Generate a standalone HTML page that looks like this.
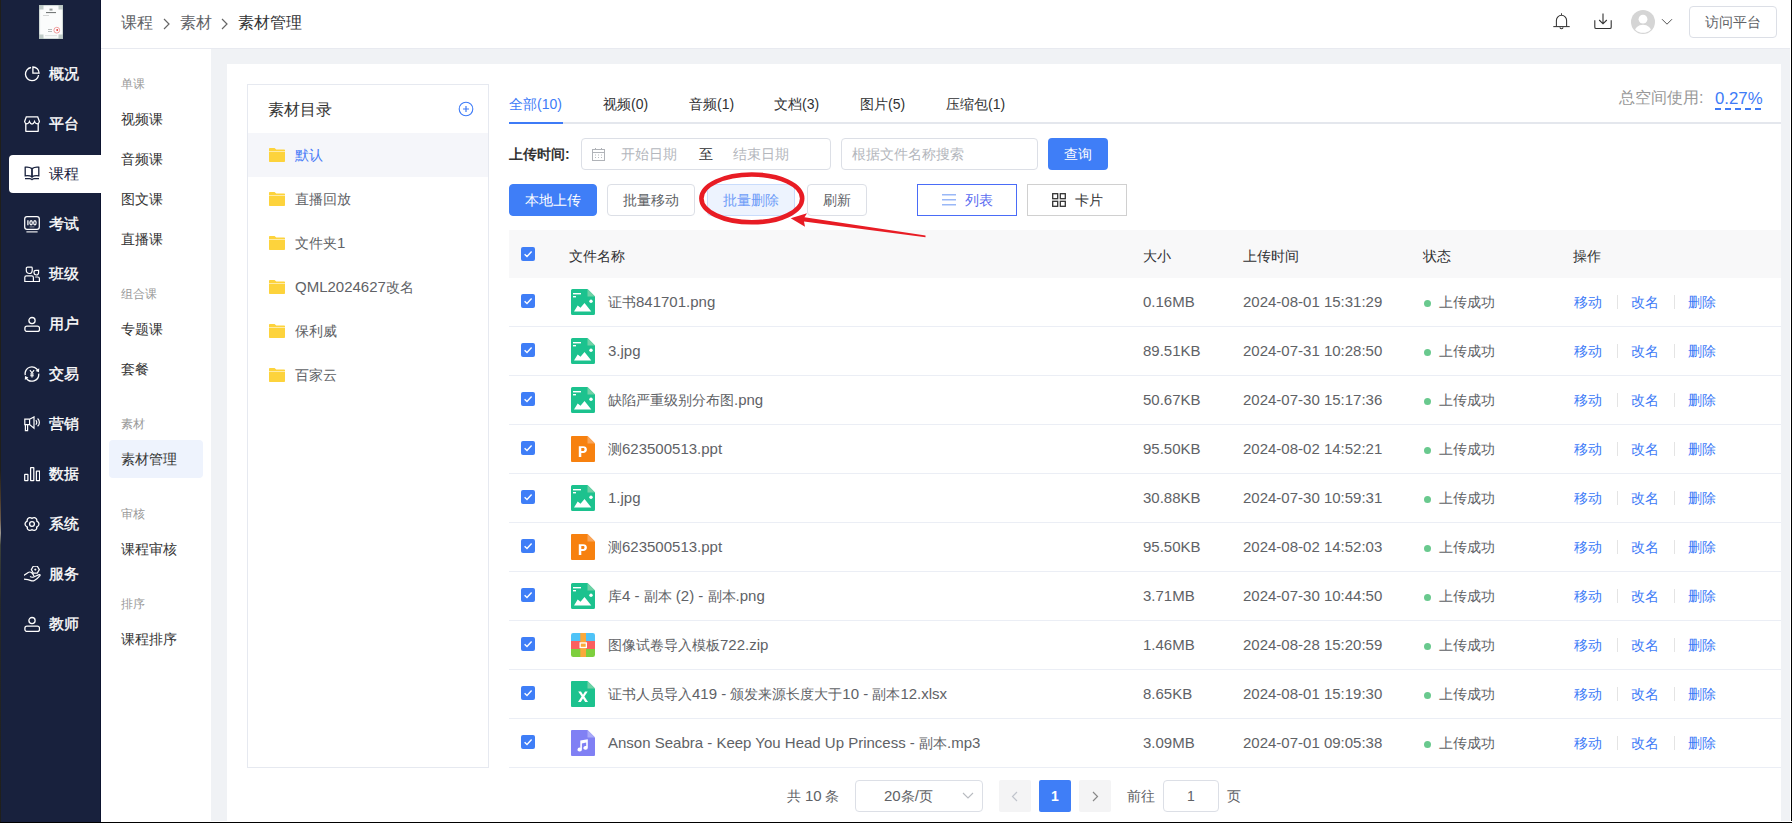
<!DOCTYPE html><html><head><meta charset="utf-8"><title>素材管理</title><style>
*{margin:0;padding:0;box-sizing:border-box}
html,body{width:1792px;height:823px;overflow:hidden;background:#f0f2f5;font-family:"Liberation Sans",sans-serif;color:#333}
.a{position:absolute}
.t{position:absolute;white-space:nowrap;line-height:1}
.nav{position:absolute;left:0;width:101px;height:38px;color:#fff;font-size:15px}
.nav .ic{position:absolute;left:25px;top:12px;width:15px;height:15px}
.nav .tx{position:absolute;left:49px;top:0;line-height:38px}
.sub{position:absolute;left:121px;font-size:14px;color:#333;line-height:20px;height:20px}
.lab{position:absolute;left:121px;font-size:12px;color:#999;line-height:16px;height:16px}
.fold{position:absolute;left:248px;width:240px;height:44px}
.fold svg{position:absolute;left:21px;top:15px}
.fold>span{position:absolute;left:47px;top:0;line-height:44px;font-size:14px;color:#606266}
.btn{position:absolute;top:184px;height:32px;border:1px solid #dcdfe6;border-radius:4px;background:#fff;font-size:14px;color:#606266;text-align:center;line-height:30px}
.row{position:absolute;left:509px;width:1272px;height:49px;border-bottom:1px solid #ebeef5;font-size:14px;color:#606266}
.row .cb{position:absolute;left:12px;top:16px}
.row .fi{position:absolute;left:62px;top:11px}
.row>.c{position:absolute;top:0;line-height:48px;white-space:nowrap}
.dot{position:absolute;left:915px;top:22px;width:7px;height:7px;border-radius:50%;background:#69c98e}
.lk{color:#3e7bf7}
.l{font-size:15px}
.sep{position:absolute;top:17px;width:1px;height:14px;background:#e4e4e4}
</style></head><body>
<div class="a" style="left:0;top:0;width:101px;height:823px;background:#18213d"></div>
<div class="a" style="left:0;top:0;width:1px;height:823px;background:linear-gradient(#1f1f1b 0,#1f1f1b 470px,#4a3b2c 500px,#6a5a4c 520px,#9a9690 533px,#3a3f3a 545px,#25282a 600px,#1f1f1b 823px)"></div>
<svg class="a" style="left:39px;top:5px" width="24" height="34" viewBox="0 0 24 34"><rect width="24" height="34" fill="#e9eeec"/><rect x="1.2" y="1.2" width="21.6" height="31.6" fill="#fbfcfc"/><rect x="0" y="0" width="24" height="34" fill="none" stroke="#b9c6c3" stroke-width="1"/><path d="M0 0h4.5v4.5h-4.5zM19.5 0h4.5v4.5h-4.5zM0 29.5h4.5v4.5h-4.5zM19.5 29.5h4.5v4.5h-4.5z" fill="#aebcb8" opacity=".75"/><rect x="10.5" y="3.6" width="3" height="2" fill="#9aa09f"/><rect x="7" y="7" width="10" height="1.1" fill="#777b7b"/><rect x="4" y="10" width="6" height="0.7" fill="#c3c6c6"/><rect x="9" y="24" width="4" height="0.8" fill="#a6a9a9"/><rect x="9" y="26" width="4" height="0.8" fill="#a6a9a9"/><circle cx="17.8" cy="25.2" r="2.9" fill="none" stroke="#ea7b7b" stroke-width="0.7"/><circle cx="18.2" cy="25" r="0.9" fill="#e03535"/><rect x="6" y="30.5" width="12" height="0.6" fill="#c7cfcd"/></svg>
<div class="nav" style="top:55px;color:#fff"><span class="ic" style="top:11px;left:24px"><svg width="16" height="16" viewBox="0 0 16 16" fill="none" stroke="currentColor" stroke-width="1.3"><path d="M7.1 1.5A6.6 6.6 0 1 0 14.6 9"/><path d="M8.9 1V7.2H15.1A6.2 6.2 0 0 0 8.9 1Z"/></svg></span><span class="tx" style="font-weight:500;-webkit-text-stroke:0.35px #fff">概况</span></div>
<div class="nav" style="top:105px;color:#fff"><span class="ic" style="top:11px;left:24px"><svg width="16" height="16" viewBox="0 0 16 16" fill="none" stroke="currentColor" stroke-width="1.3"><path d="M2.3 0.9H13.7L15.4 5.6Q14.8 7.9 13.2 7.8Q11.2 7.6 10.6 5.6Q9.6 8.1 8 8.1Q6.4 8.1 5.4 5.6Q4.8 7.6 2.8 7.8Q1.2 7.9 0.6 5.6Z"/><path d="M1.8 7.3V14.9C1.8 15.2 2 15.4 2.3 15.4H13.7C14 15.4 14.2 15.2 14.2 14.9V7.3"/></svg></span><span class="tx" style="font-weight:500;-webkit-text-stroke:0.35px #fff">平台</span></div>
<div class="a" style="left:9px;top:155px;width:93px;height:38px;background:#fff;border-radius:4px 0 0 4px"></div>
<div class="nav" style="top:155px;color:#18213d"><span class="ic" style="top:11px;left:24px"><svg width="16" height="16" viewBox="0 0 16 16" fill="none" stroke="currentColor" stroke-width="1.3"><path d="M1.2 1.2C3.6 0.8 6 1.2 8 2.6V10.8C6 9.6 3.6 9.4 1.2 9.8Z"/><path d="M14.8 1.2C12.4 0.8 10 1.2 8 2.6V10.8C10 9.6 12.4 9.4 14.8 9.8Z"/><path d="M1 12.6H5.6Q7 12.6 8 13.6Q9 12.6 10.4 12.6H15"/></svg></span><span class="tx" style="font-weight:normal;-webkit-text-stroke:0">课程</span></div>
<div class="nav" style="top:205px;color:#fff"><span class="ic" style="top:11px;left:24px"><svg width="16" height="17" viewBox="0 0 16 17" fill="none" stroke="currentColor" stroke-width="1.25"><rect x="0.7" y="0.7" width="14.6" height="12.7" rx="2.3"/><path d="M2.4 15.9H13.6" stroke-width="1.1"/><path d="M3.9 4.3V9.3" stroke-width="1.3"/><ellipse cx="7.1" cy="6.8" rx="1.2" ry="2.1" stroke-width="1.2"/><ellipse cx="10.9" cy="6.8" rx="1.2" ry="2.1" stroke-width="1.2"/><path d="M5.6 10.9H10.4" stroke-width=".8" opacity=".6"/></svg></span><span class="tx" style="font-weight:500;-webkit-text-stroke:0.35px #fff">考试</span></div>
<div class="nav" style="top:255px;color:#fff"><span class="ic" style="top:11px;left:24px"><svg width="16" height="16" viewBox="0 0 16 16" fill="none" stroke="currentColor" stroke-width="1.2"><path d="M2.3 2.2C2.3 1.5 2.8 1.1 3.5 1.1H7.4C7.9 1.1 8.2 1.4 8.2 1.9V4.4C8.2 6.2 7 7.5 5.3 7.5S2.3 6.2 2.3 4.4Z"/><path d="M10 6.2C10 5 10.8 4.4 12 4.4H14.6V6.5C14.6 8 13.6 9 12.3 9S10 8 10 6.6Z"/><path d="M0.8 15.5V11.4C0.8 10.4 1.4 9.8 2.4 9.8H7.8C8.8 9.8 9.4 10.4 9.4 11.4V15.5Z"/><path d="M9.4 15.5H15.4V12.6C15.4 11.6 14.8 11 13.8 11H11.2"/></svg></span><span class="tx" style="font-weight:500;-webkit-text-stroke:0.35px #fff">班级</span></div>
<div class="nav" style="top:305px;color:#fff"><span class="ic" style="top:11px;left:24px"><svg width="16" height="16" viewBox="0 0 16 16" fill="none" stroke="currentColor" stroke-width="1.3"><circle cx="8" cy="4.6" r="3.1"/><rect x="0.9" y="10.2" width="14.6" height="5.3" rx="2.1"/></svg></span><span class="tx" style="font-weight:500;-webkit-text-stroke:0.35px #fff">用户</span></div>
<div class="nav" style="top:355px;color:#fff"><span class="ic" style="top:11px;left:24px"><svg width="16" height="16" viewBox="0 0 16 16" fill="none" stroke="currentColor" stroke-width="1.3"><path d="M1.3 9.2A6.8 6.8 0 0 1 14 4.6"/><path d="M14.7 7.6A6.8 6.8 0 0 1 2 11.6"/><path d="M15.2 2.3L15 6.2L11.6 4.9Z" fill="currentColor" stroke="none"/><path d="M0.8 14L1 10.1L4.4 11.4Z" fill="currentColor" stroke="none"/><path d="M5.9 4.2L8 6.9L10.1 4.2M8 6.9V11.6M6.2 8H9.8M6.2 9.7H9.8" stroke-width="1.1"/></svg></span><span class="tx" style="font-weight:500;-webkit-text-stroke:0.35px #fff">交易</span></div>
<div class="nav" style="top:405px;color:#fff"><span class="ic" style="top:11px;left:24px"><svg width="16" height="16" viewBox="0 0 16 16" fill="none" stroke="currentColor" stroke-width="1.2"><path d="M0.8 3.2H5.6L10 0.9V12.3L5.6 8.6H0.8Z"/><path d="M5.6 3.2V8.6"/><path d="M1.4 8.6V14.6H3.6V8.6"/><path d="M11.8 4.2A3 3 0 0 1 11.8 8.6"/><path d="M13.6 2.5A5.2 5.2 0 0 1 13.6 10.3"/></svg></span><span class="tx" style="font-weight:500;-webkit-text-stroke:0.35px #fff">营销</span></div>
<div class="nav" style="top:455px;color:#fff"><span class="ic" style="top:11px;left:24px"><svg width="16" height="16" viewBox="0 0 16 16" fill="none" stroke="currentColor" stroke-width="1.25"><rect x="0.7" y="8.4" width="3.2" height="6.2" rx=".3"/><rect x="6.6" y="1.6" width="3.2" height="13" rx=".3"/><rect x="12.4" y="5" width="3.2" height="9.6" rx=".3"/></svg></span><span class="tx" style="font-weight:500;-webkit-text-stroke:0.35px #fff">数据</span></div>
<div class="nav" style="top:505px;color:#fff"><span class="ic" style="top:11px;left:24px"><svg width="16" height="16" viewBox="0 0 16 16" fill="none" stroke="currentColor" stroke-width="1.3"><path d="M14.90 8.00 L14.88 7.70 L14.83 7.40 L14.74 7.11 L14.62 6.83 L14.47 6.56 L14.30 6.31 L14.10 6.08 L13.87 5.86 L13.63 5.67 L13.38 5.49 L13.12 5.34 L12.85 5.20 L12.87 4.90 L12.86 4.59 L12.84 4.29 L12.79 3.98 L12.71 3.68 L12.61 3.39 L12.48 3.11 L12.32 2.85 L12.14 2.60 L11.93 2.38 L11.70 2.19 L11.45 2.02 L11.18 1.89 L10.90 1.79 L10.60 1.72 L10.30 1.68 L9.99 1.68 L9.69 1.70 L9.38 1.76 L9.09 1.84 L8.80 1.95 L8.52 2.09 L8.25 2.24 L8.00 2.40 L7.75 2.24 L7.48 2.09 L7.20 1.95 L6.91 1.84 L6.62 1.76 L6.31 1.70 L6.01 1.68 L5.70 1.68 L5.40 1.72 L5.10 1.79 L4.82 1.89 L4.55 2.02 L4.30 2.19 L4.07 2.38 L3.86 2.60 L3.68 2.85 L3.52 3.11 L3.39 3.39 L3.29 3.68 L3.21 3.98 L3.16 4.29 L3.14 4.59 L3.13 4.90 L3.15 5.20 L2.88 5.34 L2.62 5.49 L2.37 5.67 L2.13 5.86 L1.90 6.08 L1.70 6.31 L1.53 6.56 L1.38 6.83 L1.26 7.11 L1.17 7.40 L1.12 7.70 L1.10 8.00 L1.12 8.30 L1.17 8.60 L1.26 8.89 L1.38 9.17 L1.53 9.44 L1.70 9.69 L1.90 9.92 L2.13 10.14 L2.37 10.33 L2.62 10.51 L2.88 10.66 L3.15 10.80 L3.13 11.10 L3.14 11.41 L3.16 11.71 L3.21 12.02 L3.29 12.32 L3.39 12.61 L3.52 12.89 L3.68 13.15 L3.86 13.40 L4.07 13.62 L4.30 13.81 L4.55 13.98 L4.82 14.11 L5.10 14.21 L5.40 14.28 L5.70 14.32 L6.01 14.32 L6.31 14.30 L6.62 14.24 L6.91 14.16 L7.20 14.05 L7.48 13.91 L7.75 13.76 L8.00 13.60 L8.25 13.76 L8.52 13.91 L8.80 14.05 L9.09 14.16 L9.38 14.24 L9.69 14.30 L9.99 14.32 L10.30 14.32 L10.60 14.28 L10.90 14.21 L11.18 14.11 L11.45 13.98 L11.70 13.81 L11.93 13.62 L12.14 13.40 L12.32 13.15 L12.48 12.89 L12.61 12.61 L12.71 12.32 L12.79 12.02 L12.84 11.71 L12.86 11.41 L12.87 11.10 L12.85 10.80 L13.12 10.66 L13.38 10.51 L13.63 10.33 L13.87 10.14 L14.10 9.92 L14.30 9.69 L14.47 9.44 L14.62 9.17 L14.74 8.89 L14.83 8.60 L14.88 8.30 L14.90 8.00Z"/><circle cx="8" cy="8" r="2.4"/></svg></span><span class="tx" style="font-weight:500;-webkit-text-stroke:0.35px #fff">系统</span></div>
<div class="nav" style="top:555px;color:#fff"><span class="ic" style="top:11px;left:24px"><svg width="18" height="16" viewBox="0 0 18 16" fill="none" stroke="currentColor" stroke-width="1.2"><path d="M15.3 3.6L13.3 7.1H9.3L7.3 3.6L9.3 0.2H13.3Z"/><path d="M11.3 2.6V4.6M10.3 3.6H12.3" stroke-width="1"/><path d="M-0.6 9.6Q2 7.8 4.2 6.4Q6 5.4 8 7Q9.5 8.5 10 10.2"/><path d="M6 10.6Q8 11.8 10.2 10.8L15 8.6Q16.4 8.4 16 9.6Q14 12.2 10.4 14.4Q8.8 15.4 7 14.6Q4 13.2 -0.6 13.2"/></svg></span><span class="tx" style="font-weight:500;-webkit-text-stroke:0.35px #fff">服务</span></div>
<div class="nav" style="top:605px;color:#fff"><span class="ic" style="top:11px;left:24px"><svg width="16" height="16" viewBox="0 0 16 16" fill="none" stroke="currentColor" stroke-width="1.3"><circle cx="8" cy="4.6" r="3.1"/><rect x="0.9" y="10.2" width="14.6" height="5.3" rx="2.1"/></svg></span><span class="tx" style="font-weight:500;-webkit-text-stroke:0.35px #fff">教师</span></div>
<div class="a" style="left:100px;top:0;width:1px;height:155px;background:#0d1430"></div>
<div class="a" style="left:100px;top:193px;width:1px;height:630px;background:#0d1430"></div>
<div class="a" style="left:101px;top:49px;width:110px;height:774px;background:#fff"></div>
<div class="a" style="left:109px;top:440px;width:94px;height:38px;background:#eef3fd;border-radius:4px"></div>
<div class="lab" style="top:76px">单课</div>
<div class="lab" style="top:286px">组合课</div>
<div class="lab" style="top:416px">素材</div>
<div class="lab" style="top:506px">审核</div>
<div class="lab" style="top:596px">排序</div>
<div class="sub" style="top:109px">视频课</div>
<div class="sub" style="top:149px">音频课</div>
<div class="sub" style="top:189px">图文课</div>
<div class="sub" style="top:229px">直播课</div>
<div class="sub" style="top:319px">专题课</div>
<div class="sub" style="top:359px">套餐</div>
<div class="sub" style="top:449px">素材管理</div>
<div class="sub" style="top:539px">课程审核</div>
<div class="sub" style="top:629px">课程排序</div>
<div class="a" style="left:101px;top:0;width:1690px;height:48px;background:#fff"></div>
<div class="a" style="left:101px;top:48px;width:1690px;height:1px;background:#e8eaf0"></div>
<div class="t" style="left:121px;top:15px;font-size:16px;line-height:16px;color:#606266">课程</div>
<div class="a" style="left:163px;top:16px"><svg width="7" height="12" viewBox="0 0 7 12" fill="none" stroke="#666" stroke-width="1.2"><path d="M1 1L6 6L1 11"/></svg></div>
<div class="t" style="left:180px;top:15px;font-size:16px;line-height:16px;color:#606266">素材</div>
<div class="a" style="left:221px;top:16px"><svg width="7" height="12" viewBox="0 0 7 12" fill="none" stroke="#666" stroke-width="1.2"><path d="M1 1L6 6L1 11"/></svg></div>
<div class="t" style="left:238px;top:15px;font-size:16px;line-height:16px;color:#303133">素材管理</div>
<svg class="a" style="left:1553px;top:13px" width="17" height="18" viewBox="0 0 17 18" fill="none" stroke="#333" stroke-width="1.05"><path d="M8.5 0.3V1.9"/><path d="M3.4 13.6V7.4A5.1 5.1 0 0 1 13.6 7.4V13.6"/><path d="M0.3 13.6H16.7"/><path d="M7 14.2A1.5 1.5 0 0 0 10 14.2"/></svg>
<svg class="a" style="left:1594px;top:13px" width="18" height="17" viewBox="0 0 18 17" fill="none" stroke="#333" stroke-width="1.1"><path d="M9 0.5V10.5M5.2 7L9 10.8L12.8 7"/><path d="M0.8 7.2V14.2C0.8 15 1.3 15.5 2.1 15.5H15.9C16.7 15.5 17.2 15 17.2 14.2V7.2"/></svg>
<svg class="a" style="left:1631px;top:10px" width="24" height="24" viewBox="0 0 24 24"><defs><clipPath id="avc"><circle cx="12" cy="12" r="10.8"/></clipPath></defs><circle cx="12" cy="12" r="12" fill="#d5d5d5"/><circle cx="12" cy="9.2" r="4.4" fill="#fff"/><ellipse cx="12" cy="22" rx="8.6" ry="7.2" fill="#fff" clip-path="url(#avc)"/></svg>
<svg class="a" style="left:1661px;top:18px" width="12" height="8" viewBox="0 0 12 8" fill="none" stroke="#555" stroke-width="1"><path d="M1 1.2L6 6.2L11 1.2"/></svg>
<div class="a" style="left:1689px;top:6px;width:88px;height:32px;border:1px solid #dcdfe6;border-radius:4px;font-size:14px;color:#606266;text-align:center;line-height:30px">访问平台</div>
<div class="a" style="left:227px;top:64px;width:1554px;height:757px;background:#fff"></div>
<div class="a" style="left:247px;top:84px;width:242px;height:684px;border:1px solid #e6e9f0"></div>
<div class="t" style="left:268px;top:102px;font-size:16px;line-height:16px;color:#333">素材目录</div>
<svg class="a" style="left:458px;top:101px" width="16" height="16" viewBox="0 0 16 16" fill="none" stroke="#3e7bf7" stroke-width="1.1"><circle cx="8" cy="8" r="6.8"/><path d="M8 5V11M5 8H11" stroke-width="1.2"/></svg>
<div class="fold" style="top:133px;background:#f5f6fa;"><svg width="16" height="14" viewBox="0 0 16 14"><path d="M0 1C0 .4.4 0 1 0H5.6L7.2 1.6H15C15.6 1.6 16 2 16 2.6V13C16 13.6 15.6 14 15 14H1C.4 14 0 13.6 0 13Z" fill="#fdd33c"/><rect x="0" y="3" width="16" height="1" fill="#fff" opacity=".55"/></svg><span style="color:#4a7cf7;">默认</span></div>
<div class="fold" style="top:177px;"><svg width="16" height="14" viewBox="0 0 16 14"><path d="M0 1C0 .4.4 0 1 0H5.6L7.2 1.6H15C15.6 1.6 16 2 16 2.6V13C16 13.6 15.6 14 15 14H1C.4 14 0 13.6 0 13Z" fill="#fdd33c"/><rect x="0" y="3" width="16" height="1" fill="#fff" opacity=".55"/></svg><span style="">直播回放</span></div>
<div class="fold" style="top:221px;"><svg width="16" height="14" viewBox="0 0 16 14"><path d="M0 1C0 .4.4 0 1 0H5.6L7.2 1.6H15C15.6 1.6 16 2 16 2.6V13C16 13.6 15.6 14 15 14H1C.4 14 0 13.6 0 13Z" fill="#fdd33c"/><rect x="0" y="3" width="16" height="1" fill="#fff" opacity=".55"/></svg><span style="">文件夹<span class="l">1</span></span></div>
<div class="fold" style="top:265px;"><svg width="16" height="14" viewBox="0 0 16 14"><path d="M0 1C0 .4.4 0 1 0H5.6L7.2 1.6H15C15.6 1.6 16 2 16 2.6V13C16 13.6 15.6 14 15 14H1C.4 14 0 13.6 0 13Z" fill="#fdd33c"/><rect x="0" y="3" width="16" height="1" fill="#fff" opacity=".55"/></svg><span style=""><span class="l">QML2024627</span>改名</span></div>
<div class="fold" style="top:309px;"><svg width="16" height="14" viewBox="0 0 16 14"><path d="M0 1C0 .4.4 0 1 0H5.6L7.2 1.6H15C15.6 1.6 16 2 16 2.6V13C16 13.6 15.6 14 15 14H1C.4 14 0 13.6 0 13Z" fill="#fdd33c"/><rect x="0" y="3" width="16" height="1" fill="#fff" opacity=".55"/></svg><span style="">保利威</span></div>
<div class="fold" style="top:353px;"><svg width="16" height="14" viewBox="0 0 16 14"><path d="M0 1C0 .4.4 0 1 0H5.6L7.2 1.6H15C15.6 1.6 16 2 16 2.6V13C16 13.6 15.6 14 15 14H1C.4 14 0 13.6 0 13Z" fill="#fdd33c"/><rect x="0" y="3" width="16" height="1" fill="#fff" opacity=".55"/></svg><span style="">百家云</span></div>
<div class="t" style="left:509px;top:97px;font-size:14px;line-height:14px;color:#3e7bf7">全部(10)</div>
<div class="t" style="left:603px;top:97px;font-size:14px;line-height:14px;color:#303133">视频(0)</div>
<div class="t" style="left:689px;top:97px;font-size:14px;line-height:14px;color:#303133">音频(1)</div>
<div class="t" style="left:774px;top:97px;font-size:14px;line-height:14px;color:#303133">文档(3)</div>
<div class="t" style="left:860px;top:97px;font-size:14px;line-height:14px;color:#303133">图片(5)</div>
<div class="t" style="left:946px;top:97px;font-size:14px;line-height:14px;color:#303133">压缩包(1)</div>
<div class="a" style="left:509px;top:122px;width:1272px;height:2px;background:#e4e7ed"></div>
<div class="a" style="left:509px;top:122px;width:54px;height:2px;background:#3e7bf7"></div>
<div class="t" style="left:1619px;top:90px;font-size:16px;line-height:16px;color:#999">总空间使用:</div>
<div class="t" style="left:1715px;top:91px;font-size:16.8px;line-height:16px;color:#3e7bf7">0.27%</div>
<div class="a" style="left:1715px;top:108px;width:46px;height:2px;background:repeating-linear-gradient(90deg,#3e7bf7 0 6px,transparent 6px 10px)"></div>
<div class="t" style="left:509px;top:147px;font-size:14px;line-height:14px;color:#333;font-weight:bold">上传时间:</div>
<div class="a" style="left:581px;top:138px;width:250px;height:32px;border:1px solid #dcdfe6;border-radius:4px"></div>
<svg class="a" style="left:592px;top:148px" width="13" height="13" viewBox="0 0 13 13" fill="none" stroke="#b0b3b8" stroke-width="1"><rect x=".5" y="1.5" width="12" height="11"/><path d="M.5 4.5H12.5M3.5 0V2M9.5 0V2"/><path d="M3 7H4M6 7H7M9 7H10M3 9.5H4M6 9.5H7M9 9.5H10" stroke-width=".9"/></svg>
<div class="t" style="left:621px;top:147px;font-size:14px;line-height:14px;color:#b4b7bd">开始日期</div>
<div class="t" style="left:699px;top:147px;font-size:14px;line-height:14px;color:#303133">至</div>
<div class="t" style="left:733px;top:147px;font-size:14px;line-height:14px;color:#b4b7bd">结束日期</div>
<div class="a" style="left:841px;top:138px;width:197px;height:32px;border:1px solid #dcdfe6;border-radius:4px"></div>
<div class="t" style="left:852px;top:147px;font-size:14px;line-height:14px;color:#b4b7bd">根据文件名称搜索</div>
<div class="a" style="left:1048px;top:138px;width:60px;height:32px;background:#3f7ef7;border-radius:4px;color:#fff;font-size:14px;text-align:center;line-height:32px">查询</div>
<div class="btn" style="left:509px;width:88px;background:#3f7ef7;border-color:#3f7ef7;color:#fff">本地上传</div>
<div class="btn" style="left:607px;width:88px">批量移动</div>
<div class="btn" style="left:707px;width:88px;background:#edf3fe;border-color:#c9dcfc;color:#6f9df8">批量删除</div>
<div class="btn" style="left:807px;width:60px">刷新</div>
<div class="btn" style="left:917px;width:100px;border-radius:0;border-color:#4a6cf7;color:#5a6cf0"><svg style="position:absolute;left:24px;top:9px" width="14" height="12" viewBox="0 0 14 12"><rect y="0" width="14" height="1.5" fill="#9ab8f7"/><rect y="5" width="14" height="1.5" fill="#9ab8f7"/><rect y="10" width="14" height="1.5" fill="#9ab8f7"/></svg><span style="position:absolute;left:47px;top:0">列表</span></div>
<div class="btn" style="left:1027px;width:100px;border-radius:0;border-color:#d0d0d0;color:#303133"><svg style="position:absolute;left:24px;top:8px" width="14" height="14" viewBox="0 0 14 14" fill="none" stroke="#333" stroke-width="1.3"><rect x=".7" y=".7" width="5" height="5"/><rect x="8.3" y=".7" width="5" height="5"/><rect x=".7" y="8.3" width="5" height="5"/><rect x="8.3" y="8.3" width="5" height="5"/></svg><span style="position:absolute;left:47px;top:0">卡片</span></div>
<div class="a" style="left:509px;top:230px;width:1272px;height:48px;background:#f8f8f9"></div>
<div class="a" style="left:521px;top:247px"><svg width="14" height="14" viewBox="0 0 14 14"><rect width="14" height="14" rx="2" fill="#3f7ef7"/><path d="M3.6 7.2L6 9.5L10.6 4.6" stroke="#fff" stroke-width="1.4" fill="none"/></svg></div>
<div class="t" style="left:569px;top:249px;font-size:14px;line-height:14px;color:#303133">文件名称</div>
<div class="t" style="left:1143px;top:249px;font-size:14px;line-height:14px;color:#303133">大小</div>
<div class="t" style="left:1243px;top:249px;font-size:14px;line-height:14px;color:#303133">上传时间</div>
<div class="t" style="left:1423px;top:249px;font-size:14px;line-height:14px;color:#303133">状态</div>
<div class="t" style="left:1573px;top:249px;font-size:14px;line-height:14px;color:#303133">操作</div>
<div class="row" style="top:278px"><span class="cb"><svg width="14" height="14" viewBox="0 0 14 14"><rect width="14" height="14" rx="2" fill="#3f7ef7"/><path d="M3.6 7.2L6 9.5L10.6 4.6" stroke="#fff" stroke-width="1.4" fill="none"/></svg></span><span class="fi"><svg width="24" height="26" viewBox="0 0 24 26"><path d="M1.5 0H16.5L24 7.5V24.5A1.5 1.5 0 0 1 22.5 26H1.5A1.5 1.5 0 0 1 0 24.5V1.5A1.5 1.5 0 0 1 1.5 0Z" fill="#1cc28e"/><path d="M16.5 0L24 7.5H16.5Z" fill="#6fd1a5"/><rect x="2" y="4" width="8" height="1.4" fill="#fff"/><rect x="2" y="7" width="3" height="1.4" fill="#fff"/><circle cx="20" cy="12.2" r="1.7" fill="#fff"/><path d="M3 22.5L6.7 16.4L9.5 18.8L13.5 14.1L20.3 22.5Z" fill="#fff"/></svg></span><span class="c" style="left:99px">证书<span class="l">841701.png</span></span><span class="c" style="left:634px"><span class="l">0.16MB</span></span><span class="c" style="left:734px"><span class="l">2024-08-01 15:31:29</span></span><span class="dot"></span><span class="c" style="left:930px">上传成功</span><span class="c lk" style="left:1065px">移动</span><span class="sep" style="left:1108px"></span><span class="c lk" style="left:1122px">改名</span><span class="sep" style="left:1165px"></span><span class="c lk" style="left:1179px">删除</span></div>
<div class="row" style="top:327px"><span class="cb"><svg width="14" height="14" viewBox="0 0 14 14"><rect width="14" height="14" rx="2" fill="#3f7ef7"/><path d="M3.6 7.2L6 9.5L10.6 4.6" stroke="#fff" stroke-width="1.4" fill="none"/></svg></span><span class="fi"><svg width="24" height="26" viewBox="0 0 24 26"><path d="M1.5 0H16.5L24 7.5V24.5A1.5 1.5 0 0 1 22.5 26H1.5A1.5 1.5 0 0 1 0 24.5V1.5A1.5 1.5 0 0 1 1.5 0Z" fill="#1cc28e"/><path d="M16.5 0L24 7.5H16.5Z" fill="#6fd1a5"/><rect x="2" y="4" width="8" height="1.4" fill="#fff"/><rect x="2" y="7" width="3" height="1.4" fill="#fff"/><circle cx="20" cy="12.2" r="1.7" fill="#fff"/><path d="M3 22.5L6.7 16.4L9.5 18.8L13.5 14.1L20.3 22.5Z" fill="#fff"/></svg></span><span class="c" style="left:99px"><span class="l">3.jpg</span></span><span class="c" style="left:634px"><span class="l">89.51KB</span></span><span class="c" style="left:734px"><span class="l">2024-07-31 10:28:50</span></span><span class="dot"></span><span class="c" style="left:930px">上传成功</span><span class="c lk" style="left:1065px">移动</span><span class="sep" style="left:1108px"></span><span class="c lk" style="left:1122px">改名</span><span class="sep" style="left:1165px"></span><span class="c lk" style="left:1179px">删除</span></div>
<div class="row" style="top:376px"><span class="cb"><svg width="14" height="14" viewBox="0 0 14 14"><rect width="14" height="14" rx="2" fill="#3f7ef7"/><path d="M3.6 7.2L6 9.5L10.6 4.6" stroke="#fff" stroke-width="1.4" fill="none"/></svg></span><span class="fi"><svg width="24" height="26" viewBox="0 0 24 26"><path d="M1.5 0H16.5L24 7.5V24.5A1.5 1.5 0 0 1 22.5 26H1.5A1.5 1.5 0 0 1 0 24.5V1.5A1.5 1.5 0 0 1 1.5 0Z" fill="#1cc28e"/><path d="M16.5 0L24 7.5H16.5Z" fill="#6fd1a5"/><rect x="2" y="4" width="8" height="1.4" fill="#fff"/><rect x="2" y="7" width="3" height="1.4" fill="#fff"/><circle cx="20" cy="12.2" r="1.7" fill="#fff"/><path d="M3 22.5L6.7 16.4L9.5 18.8L13.5 14.1L20.3 22.5Z" fill="#fff"/></svg></span><span class="c" style="left:99px">缺陷严重级别分布图<span class="l">.png</span></span><span class="c" style="left:634px"><span class="l">50.67KB</span></span><span class="c" style="left:734px"><span class="l">2024-07-30 15:17:36</span></span><span class="dot"></span><span class="c" style="left:930px">上传成功</span><span class="c lk" style="left:1065px">移动</span><span class="sep" style="left:1108px"></span><span class="c lk" style="left:1122px">改名</span><span class="sep" style="left:1165px"></span><span class="c lk" style="left:1179px">删除</span></div>
<div class="row" style="top:425px"><span class="cb"><svg width="14" height="14" viewBox="0 0 14 14"><rect width="14" height="14" rx="2" fill="#3f7ef7"/><path d="M3.6 7.2L6 9.5L10.6 4.6" stroke="#fff" stroke-width="1.4" fill="none"/></svg></span><span class="fi"><svg width="24" height="26" viewBox="0 0 24 26"><path d="M1 0H16.5L24 7.5V25A1 1 0 0 1 23 26H1A1 1 0 0 1 0 25V1A1 1 0 0 1 1 0Z" fill="#f7810f"/><path d="M16.5 0L24 7.5H16.5Z" fill="#f9a55a"/><path d="M7.8 21V10.2H12.2C14.6 10.2 15.9 11.4 15.9 13.5C15.9 15.6 14.5 16.9 12.2 16.9H10.3V21ZM10.3 15H12C13 15 13.5 14.4 13.5 13.5C13.5 12.6 13 12.1 12 12.1H10.3Z" fill="#fff"/></svg></span><span class="c" style="left:99px">测<span class="l">623500513.ppt</span></span><span class="c" style="left:634px"><span class="l">95.50KB</span></span><span class="c" style="left:734px"><span class="l">2024-08-02 14:52:21</span></span><span class="dot"></span><span class="c" style="left:930px">上传成功</span><span class="c lk" style="left:1065px">移动</span><span class="sep" style="left:1108px"></span><span class="c lk" style="left:1122px">改名</span><span class="sep" style="left:1165px"></span><span class="c lk" style="left:1179px">删除</span></div>
<div class="row" style="top:474px"><span class="cb"><svg width="14" height="14" viewBox="0 0 14 14"><rect width="14" height="14" rx="2" fill="#3f7ef7"/><path d="M3.6 7.2L6 9.5L10.6 4.6" stroke="#fff" stroke-width="1.4" fill="none"/></svg></span><span class="fi"><svg width="24" height="26" viewBox="0 0 24 26"><path d="M1.5 0H16.5L24 7.5V24.5A1.5 1.5 0 0 1 22.5 26H1.5A1.5 1.5 0 0 1 0 24.5V1.5A1.5 1.5 0 0 1 1.5 0Z" fill="#1cc28e"/><path d="M16.5 0L24 7.5H16.5Z" fill="#6fd1a5"/><rect x="2" y="4" width="8" height="1.4" fill="#fff"/><rect x="2" y="7" width="3" height="1.4" fill="#fff"/><circle cx="20" cy="12.2" r="1.7" fill="#fff"/><path d="M3 22.5L6.7 16.4L9.5 18.8L13.5 14.1L20.3 22.5Z" fill="#fff"/></svg></span><span class="c" style="left:99px"><span class="l">1.jpg</span></span><span class="c" style="left:634px"><span class="l">30.88KB</span></span><span class="c" style="left:734px"><span class="l">2024-07-30 10:59:31</span></span><span class="dot"></span><span class="c" style="left:930px">上传成功</span><span class="c lk" style="left:1065px">移动</span><span class="sep" style="left:1108px"></span><span class="c lk" style="left:1122px">改名</span><span class="sep" style="left:1165px"></span><span class="c lk" style="left:1179px">删除</span></div>
<div class="row" style="top:523px"><span class="cb"><svg width="14" height="14" viewBox="0 0 14 14"><rect width="14" height="14" rx="2" fill="#3f7ef7"/><path d="M3.6 7.2L6 9.5L10.6 4.6" stroke="#fff" stroke-width="1.4" fill="none"/></svg></span><span class="fi"><svg width="24" height="26" viewBox="0 0 24 26"><path d="M1 0H16.5L24 7.5V25A1 1 0 0 1 23 26H1A1 1 0 0 1 0 25V1A1 1 0 0 1 1 0Z" fill="#f7810f"/><path d="M16.5 0L24 7.5H16.5Z" fill="#f9a55a"/><path d="M7.8 21V10.2H12.2C14.6 10.2 15.9 11.4 15.9 13.5C15.9 15.6 14.5 16.9 12.2 16.9H10.3V21ZM10.3 15H12C13 15 13.5 14.4 13.5 13.5C13.5 12.6 13 12.1 12 12.1H10.3Z" fill="#fff"/></svg></span><span class="c" style="left:99px">测<span class="l">623500513.ppt</span></span><span class="c" style="left:634px"><span class="l">95.50KB</span></span><span class="c" style="left:734px"><span class="l">2024-08-02 14:52:03</span></span><span class="dot"></span><span class="c" style="left:930px">上传成功</span><span class="c lk" style="left:1065px">移动</span><span class="sep" style="left:1108px"></span><span class="c lk" style="left:1122px">改名</span><span class="sep" style="left:1165px"></span><span class="c lk" style="left:1179px">删除</span></div>
<div class="row" style="top:572px"><span class="cb"><svg width="14" height="14" viewBox="0 0 14 14"><rect width="14" height="14" rx="2" fill="#3f7ef7"/><path d="M3.6 7.2L6 9.5L10.6 4.6" stroke="#fff" stroke-width="1.4" fill="none"/></svg></span><span class="fi"><svg width="24" height="26" viewBox="0 0 24 26"><path d="M1.5 0H16.5L24 7.5V24.5A1.5 1.5 0 0 1 22.5 26H1.5A1.5 1.5 0 0 1 0 24.5V1.5A1.5 1.5 0 0 1 1.5 0Z" fill="#1cc28e"/><path d="M16.5 0L24 7.5H16.5Z" fill="#6fd1a5"/><rect x="2" y="4" width="8" height="1.4" fill="#fff"/><rect x="2" y="7" width="3" height="1.4" fill="#fff"/><circle cx="20" cy="12.2" r="1.7" fill="#fff"/><path d="M3 22.5L6.7 16.4L9.5 18.8L13.5 14.1L20.3 22.5Z" fill="#fff"/></svg></span><span class="c" style="left:99px">库<span class="l">4 - </span>副本<span class="l"> (2) - </span>副本<span class="l">.png</span></span><span class="c" style="left:634px"><span class="l">3.71MB</span></span><span class="c" style="left:734px"><span class="l">2024-07-30 10:44:50</span></span><span class="dot"></span><span class="c" style="left:930px">上传成功</span><span class="c lk" style="left:1065px">移动</span><span class="sep" style="left:1108px"></span><span class="c lk" style="left:1122px">改名</span><span class="sep" style="left:1165px"></span><span class="c lk" style="left:1179px">删除</span></div>
<div class="row" style="top:621px"><span class="cb"><svg width="14" height="14" viewBox="0 0 14 14"><rect width="14" height="14" rx="2" fill="#3f7ef7"/><path d="M3.6 7.2L6 9.5L10.6 4.6" stroke="#fff" stroke-width="1.4" fill="none"/></svg></span><span class="fi"><svg width="24" height="24" viewBox="0 0 24 24" style="margin-top:1px"><defs><clipPath id="zc"><rect width="24" height="24" rx="2.2"/></clipPath></defs><g clip-path="url(#zc)"><rect width="24" height="8" fill="#4fc3f7"/><rect y="8" width="24" height="8" fill="#fa5f5f"/><rect y="16" width="24" height="8" fill="#7ecf3e"/><rect x="9.3" width="5.7" height="24" fill="#fba93b"/><rect x="8.5" y="9.3" width="7.5" height="5.8" fill="#fff"/><rect x="9.8" y="10.6" width="4.9" height="3.2" fill="#fba93b"/></g></svg></span><span class="c" style="left:99px">图像试卷导入模板<span class="l">722.zip</span></span><span class="c" style="left:634px"><span class="l">1.46MB</span></span><span class="c" style="left:734px"><span class="l">2024-08-28 15:20:59</span></span><span class="dot"></span><span class="c" style="left:930px">上传成功</span><span class="c lk" style="left:1065px">移动</span><span class="sep" style="left:1108px"></span><span class="c lk" style="left:1122px">改名</span><span class="sep" style="left:1165px"></span><span class="c lk" style="left:1179px">删除</span></div>
<div class="row" style="top:670px"><span class="cb"><svg width="14" height="14" viewBox="0 0 14 14"><rect width="14" height="14" rx="2" fill="#3f7ef7"/><path d="M3.6 7.2L6 9.5L10.6 4.6" stroke="#fff" stroke-width="1.4" fill="none"/></svg></span><span class="fi"><svg width="24" height="26" viewBox="0 0 24 26"><path d="M1 0H16.5L24 7.5V25A1 1 0 0 1 23 26H1A1 1 0 0 1 0 25V1A1 1 0 0 1 1 0Z" fill="#1cc28e"/><path d="M16.5 0L24 7.5H16.5Z" fill="#6fd1a5"/><path d="M7 21L10.6 15.6L7.2 10.5H10L12 13.8L14 10.5H16.7L13.4 15.6L17 21H14.2L12 17.5L9.8 21Z" fill="#fff"/></svg></span><span class="c" style="left:99px">证书人员导入<span class="l">419 - </span>颁发来源长度大于<span class="l">10 - </span>副本<span class="l">12.xlsx</span></span><span class="c" style="left:634px"><span class="l">8.65KB</span></span><span class="c" style="left:734px"><span class="l">2024-08-01 15:19:30</span></span><span class="dot"></span><span class="c" style="left:930px">上传成功</span><span class="c lk" style="left:1065px">移动</span><span class="sep" style="left:1108px"></span><span class="c lk" style="left:1122px">改名</span><span class="sep" style="left:1165px"></span><span class="c lk" style="left:1179px">删除</span></div>
<div class="row" style="top:719px"><span class="cb"><svg width="14" height="14" viewBox="0 0 14 14"><rect width="14" height="14" rx="2" fill="#3f7ef7"/><path d="M3.6 7.2L6 9.5L10.6 4.6" stroke="#fff" stroke-width="1.4" fill="none"/></svg></span><span class="fi"><svg width="24" height="26" viewBox="0 0 24 26"><path d="M1 0H16.5L24 7.5V25A1 1 0 0 1 23 26H1A1 1 0 0 1 0 25V1A1 1 0 0 1 1 0Z" fill="#8080f4"/><path d="M16.5 0L24 7.5H16.5Z" fill="#a9a9f8"/><path d="M9.3 10.6L16.8 9.2V17.8A2.2 1.9 0 1 1 15.2 16V12.6L10.9 13.5V19.5A2.2 1.9 0 1 1 9.3 17.7Z" fill="#fff"/></svg></span><span class="c" style="left:99px"><span class="l">Anson Seabra - Keep You Head Up Princess - </span>副本<span class="l">.mp3</span></span><span class="c" style="left:634px"><span class="l">3.09MB</span></span><span class="c" style="left:734px"><span class="l">2024-07-01 09:05:38</span></span><span class="dot"></span><span class="c" style="left:930px">上传成功</span><span class="c lk" style="left:1065px">移动</span><span class="sep" style="left:1108px"></span><span class="c lk" style="left:1122px">改名</span><span class="sep" style="left:1165px"></span><span class="c lk" style="left:1179px">删除</span></div>
<div class="t" style="left:787px;top:789px;font-size:14px;line-height:14px;color:#606266">共 <span class="l">10</span> 条</div>
<div class="a" style="left:855px;top:780px;width:128px;height:32px;border:1px solid #dcdfe6;border-radius:4px"></div>
<div class="t" style="left:884px;top:789px;font-size:14px;line-height:14px;color:#606266"><span class="l">20</span>条<span class="l">/</span>页</div>
<svg class="a" style="left:962px;top:792px" width="12" height="7" viewBox="0 0 12 7" fill="none" stroke="#b8bbc0" stroke-width="1.1"><path d="M1 1L6 6L11 1"/></svg>
<div class="a" style="left:999px;top:780px;width:32px;height:32px;background:#f4f4f5;border-radius:2px"></div>
<svg class="a" style="left:1011px;top:791px" width="7" height="11" viewBox="0 0 7 11" fill="none" stroke="#c0c4cc" stroke-width="1.2"><path d="M6 1L1.5 5.5L6 10"/></svg>
<div class="a" style="left:1039px;top:780px;width:32px;height:32px;background:#3f7ef7;border-radius:2px;color:#fff;font-weight:bold;font-size:14px;text-align:center;line-height:32px">1</div>
<div class="a" style="left:1079px;top:780px;width:32px;height:32px;background:#f4f4f5;border-radius:2px"></div>
<svg class="a" style="left:1092px;top:791px" width="7" height="11" viewBox="0 0 7 11" fill="none" stroke="#888" stroke-width="1.2"><path d="M1 1L5.5 5.5L1 10"/></svg>
<div class="t" style="left:1127px;top:789px;font-size:14px;line-height:14px;color:#606266">前往</div>
<div class="a" style="left:1163px;top:780px;width:56px;height:32px;border:1px solid #dcdfe6;border-radius:4px;font-size:14px;color:#606266;text-align:center;line-height:30px">1</div>
<div class="t" style="left:1227px;top:789px;font-size:14px;line-height:14px;color:#606266">页</div>
<svg class="a" style="left:0;top:0;pointer-events:none" width="1792" height="823" viewBox="0 0 1792 823"><ellipse cx="751.8" cy="198.4" rx="50.4" ry="23.9" fill="none" stroke="#e81c24" stroke-width="4.6"/><path d="M790.7 218.3L807 213.2L804.5 217.2L925.5 235.5L925.5 237.2L804 221.6L805 226.8Z" fill="#e81c24"/></svg>
<div class="a" style="left:1790px;top:0;width:1px;height:823px;background:#fff"></div>
<div class="a" style="left:1791px;top:0;width:1px;height:823px;background:#000"></div>
<div class="a" style="left:101px;top:821px;width:1691px;height:1px;background:#fff"></div>
<div class="a" style="left:0;top:822px;width:1792px;height:1px;background:#000"></div>
</body></html>
